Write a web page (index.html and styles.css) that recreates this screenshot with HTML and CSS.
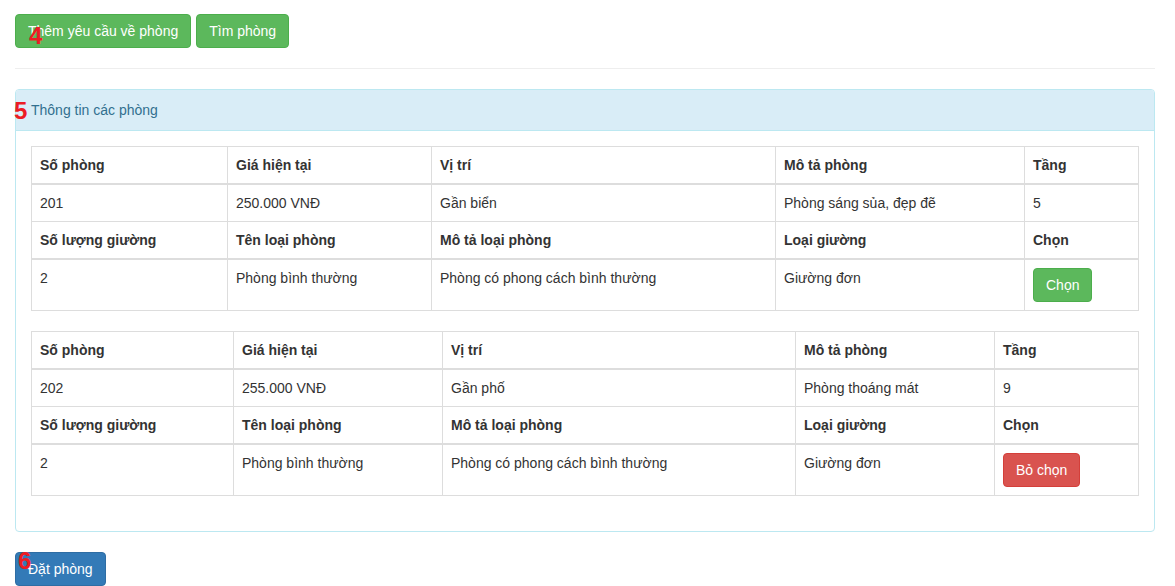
FILE: index.html
```html
<!DOCTYPE html>
<html lang="vi">
<head>
<meta charset="utf-8">
<title>Thông tin các phòng</title>
<link rel="stylesheet" href="styles.css">
</head>
<body>
<div class="page">
  <div class="toolbar">
    <button class="btn btn-success">Thêm yêu cầu về phòng</button>
    <button class="btn btn-success">Tìm phòng</button>
  </div>
  <hr class="divider">
  <div class="panel">
    <div class="panel-heading">Thông tin các phòng</div>
    <div class="panel-body">
      <table class="room-table t1">
        <colgroup>
          <col class="c1"><col class="c2"><col class="c3"><col class="c4"><col class="c5">
        </colgroup>
        <thead>
          <tr><th>Số phòng</th><th>Giá hiện tại</th><th>Vị trí</th><th>Mô tả phòng</th><th>Tầng</th></tr>
        </thead>
        <tbody>
          <tr><td>201</td><td>250.000 VNĐ</td><td>Gần biển</td><td>Phòng sáng sủa, đẹp đẽ</td><td>5</td></tr>
          <tr class="subhead"><th>Số lượng giường</th><th>Tên loại phòng</th><th>Mô tả loại phòng</th><th>Loại giường</th><th>Chọn</th></tr>
          <tr><td>2</td><td>Phòng bình thường</td><td>Phòng có phong cách bình thường</td><td>Giường đơn</td><td><button class="btn btn-success">Chọn</button></td></tr>
        </tbody>
      </table>
      <table class="room-table t2">
        <colgroup>
          <col class="c1"><col class="c2"><col class="c3"><col class="c4"><col class="c5">
        </colgroup>
        <thead>
          <tr><th>Số phòng</th><th>Giá hiện tại</th><th>Vị trí</th><th>Mô tả phòng</th><th>Tầng</th></tr>
        </thead>
        <tbody>
          <tr><td>202</td><td>255.000 VNĐ</td><td>Gần phố</td><td>Phòng thoáng mát</td><td>9</td></tr>
          <tr class="subhead"><th>Số lượng giường</th><th>Tên loại phòng</th><th>Mô tả loại phòng</th><th>Loại giường</th><th>Chọn</th></tr>
          <tr><td>2</td><td>Phòng bình thường</td><td>Phòng có phong cách bình thường</td><td>Giường đơn</td><td><button class="btn btn-danger">Bỏ chọn</button></td></tr>
        </tbody>
      </table>
    </div>
  </div>
  <button class="btn btn-primary">Đặt phòng</button>
</div>
<span class="marker m4">4</span>
<span class="marker m5">5</span>
<span class="marker m6">6</span>
</body>
</html>
```

FILE: styles.css
```css
* { box-sizing: border-box; }
html, body { margin: 0; padding: 0; }
body {
  font-family: "Liberation Sans", Arial, Helvetica, sans-serif;
  font-size: 14px;
  line-height: 20px;
  color: #333;
  background: #fff;
  position: relative;
}
.page {
  width: 1170px;
  padding: 14px 15px 0 15px;
}
.toolbar {
  display: flex;
  gap: 5px;
}
.btn {
  display: inline-block;
  font-family: inherit;
  font-size: 14px;
  line-height: 20px;
  padding: 6px 12px;
  border: 1px solid transparent;
  border-radius: 4px;
  color: #fff;
  cursor: pointer;
  white-space: nowrap;
  margin: 0;
}
.btn-success { background: #5cb85c; border-color: #4cae4c; }
.btn-danger { background: #d9534f; border-color: #d43f3a; }
.btn-primary { background: #337ab7; border-color: #2e6da4; }
.divider {
  margin: 20px 0;
  border: 0;
  border-top: 1px solid #eee;
  height: 0;
}
.panel {
  border: 1px solid #bce8f1;
  border-radius: 4px;
  margin-bottom: 20px;
  background: #fff;
}
.panel-heading {
  background: #d9edf7;
  color: #31708f;
  padding: 10px 15px;
  border-bottom: 1px solid #bce8f1;
  border-radius: 3px 3px 0 0;
}
.panel-body {
  padding: 15px;
}
.room-table {
  width: 100%;
  border-collapse: collapse;
  border-spacing: 0;
  table-layout: fixed;
  margin-bottom: 20px;
}
.room-table th,
.room-table td {
  border: 1px solid #ddd;
  padding: 8px;
  line-height: 20px;
  vertical-align: top;
  text-align: left;
}
.room-table th { font-weight: bold; }
.room-table thead th,
.room-table .subhead th { border-bottom-width: 2px; }
.t1 .c1 { width: 196px; }
.t1 .c2 { width: 204px; }
.t1 .c3 { width: 344px; }
.t1 .c4 { width: 249px; }
.t1 .c5 { width: 114px; }
.t2 .c1 { width: 202px; }
.t2 .c2 { width: 209px; }
.t2 .c3 { width: 353px; }
.t2 .c4 { width: 199px; }
.t2 .c5 { width: 144px; }
.marker {
  position: absolute;
  font-family: "Liberation Sans", Arial, sans-serif;
  font-weight: bold;
  font-size: 24px;
  line-height: 24px;
  color: #ec1c24;
}
.m4 { left: 29px; top: 24px; }
.m5 { left: 14px; top: 99px; }
.m6 { left: 18px; top: 549px; }
```
